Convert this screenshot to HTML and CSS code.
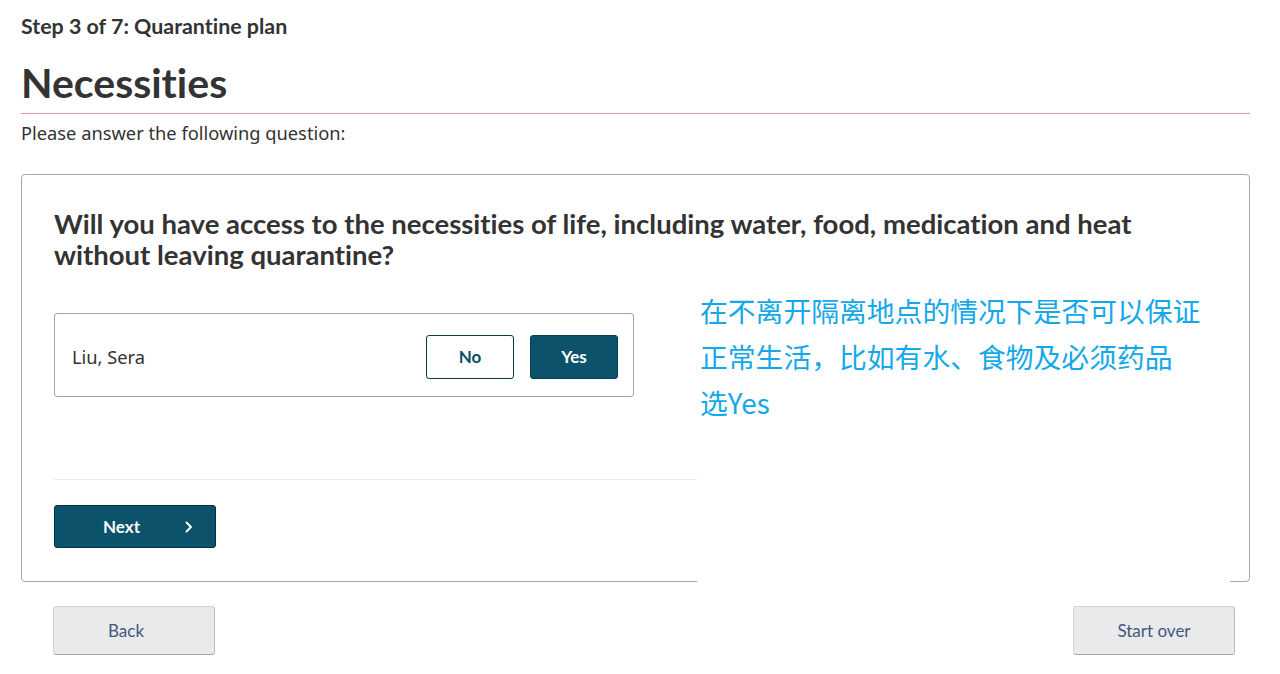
FILE: index.html
```html
<!DOCTYPE html>
<html lang="en">
<head>
<meta charset="utf-8">
<title>Necessities</title>
<link rel="stylesheet" href="styles.css">
</head>
<body>
<main class="page">
  <p class="step">Step 3 of 7: Quarantine plan</p>
  <h1 class="title">Necessities</h1>
  <p class="intro">Please answer the following question:</p>

  <section class="card">
    <h2 class="question">Will you have access to the necessities of life, including water, food, medication and heat without leaving quarantine?</h2>
    <div class="person">
      <span class="person-name">Liu, Sera</span>
      <div class="choices">
        <button class="choice choice-no" type="button">No</button>
        <button class="choice choice-yes" type="button">Yes</button>
      </div>
    </div>
    <hr class="divider">
    <button class="next" type="button">
      <span>Next</span>
      <svg class="chev" width="8" height="12" viewBox="0 0 8 12" aria-hidden="true"><path d="M1.5 1.5 L6 6 L1.5 10.5" fill="none" stroke="#fff" stroke-width="2" stroke-linecap="round" stroke-linejoin="round"/></svg>
    </button>
    <div class="note" lang="zh-CN">在不离开隔离地点的情况下是否可以保证<br>正常生活，比如有水、食物及必须药品<br>选Yes</div>
  </section>

  <div class="footer">
    <button class="ghost ghost-back" type="button">Back</button>
    <button class="ghost" type="button">Start over</button>
  </div>
</main>
</body>
</html>
```

FILE: styles.css
```css
html, body {
  margin: 0;
  padding: 0;
  background: #fff;
}
body {
  font-family: "Noto Sans", "Open Sans", sans-serif;
  color: #333;
  font-variant-ligatures: none;
}
.page {
  padding: 0 30px 0 21px;
}
.step {
  margin: 0;
  padding-top: 14px;
  font-family: Lato, sans-serif;
  font-weight: 700;
  font-size: 21.4px;
  line-height: 24px;
  color: #333;
}
.title {
  margin: 21px 0 0;
  font-family: Lato, sans-serif;
  font-weight: 700;
  font-size: 41px;
  line-height: 48px;
  color: #333;
  padding-bottom: 6px;
  border-bottom: 1px solid #e09aa4;
}
.intro {
  margin: 7px 0 0;
  font-size: 18.3px;
  line-height: 24px;
  color: #333;
}
.card {
  position: relative;
  margin-top: 29px;
  border: 1px solid #a9a9a9;
  border-radius: 4px;
  padding: 33px 33px 33px 32px;
  background: #fff;
}
.question {
  margin: 0;
  font-family: Lato, sans-serif;
  font-weight: 700;
  font-size: 27.5px;
  line-height: 31px;
  color: #333;
  max-width: 1100px;
}
.person {
  margin-top: 43px;
  width: 580px;
  height: 84px;
  box-sizing: border-box;
  border: 1px solid #a5a5a5;
  border-radius: 3px;
  display: flex;
  align-items: center;
  justify-content: space-between;
  padding: 3px 15px 0 17px;
}
.person-name {
  font-size: 18.3px;
  color: #333;
}
.choices {
  display: flex;
  gap: 16px;
}
.choice {
  width: 88px;
  height: 44px;
  border-radius: 3px;
  font-family: Lato, sans-serif;
  font-weight: 700;
  font-size: 17px;
  cursor: pointer;
}
.choice-no {
  background: #fff;
  color: #0c4f66;
  border: 1px solid #0c3848;
}
.choice-yes {
  background: #0c526a;
  color: #fff;
  border: 1px solid #0a3f52;
}
.divider {
  margin: 82px 0 0;
  border: 0;
  border-top: 1px solid #ececec;
}
.next {
  margin-top: 25px;
  width: 162px;
  height: 43px;
  background: #0c526a;
  border: 1px solid #06303f;
  border-radius: 3px;
  color: #fff;
  font-family: Lato, sans-serif;
  font-weight: 700;
  font-size: 17px;
  display: flex;
  align-items: center;
  padding: 0 0 0 48px;
  cursor: pointer;
}
.next .chev {
  margin-left: 45px;
}
.note {
  position: absolute;
  left: 675px;
  top: 109px;
  width: 533px;
  height: 298px;
  background: #fff;
  font-family: "Noto Sans CJK SC", "Noto Sans", sans-serif;
  font-size: 27.8px;
  line-height: 46px;
  color: #14a8ea;
  padding: 3px 0 0 3px;
  box-sizing: border-box;
}
.footer {
  display: flex;
  justify-content: space-between;
  margin-top: 24px;
  padding: 0 15px 0 32px;
}
.ghost {
  width: 162px;
  height: 49px;
  background: #e9eaec;
  border: 1px solid #d3d4d6;
  border-bottom-color: #a8a8a8;
  border-right-color: #bdbdbd;
  border-radius: 3px;
  font-family: Lato, sans-serif;
  font-size: 17px;
  color: #41587d;
  cursor: pointer;
}
.ghost-back {
  padding-right: 22px;
}
```
